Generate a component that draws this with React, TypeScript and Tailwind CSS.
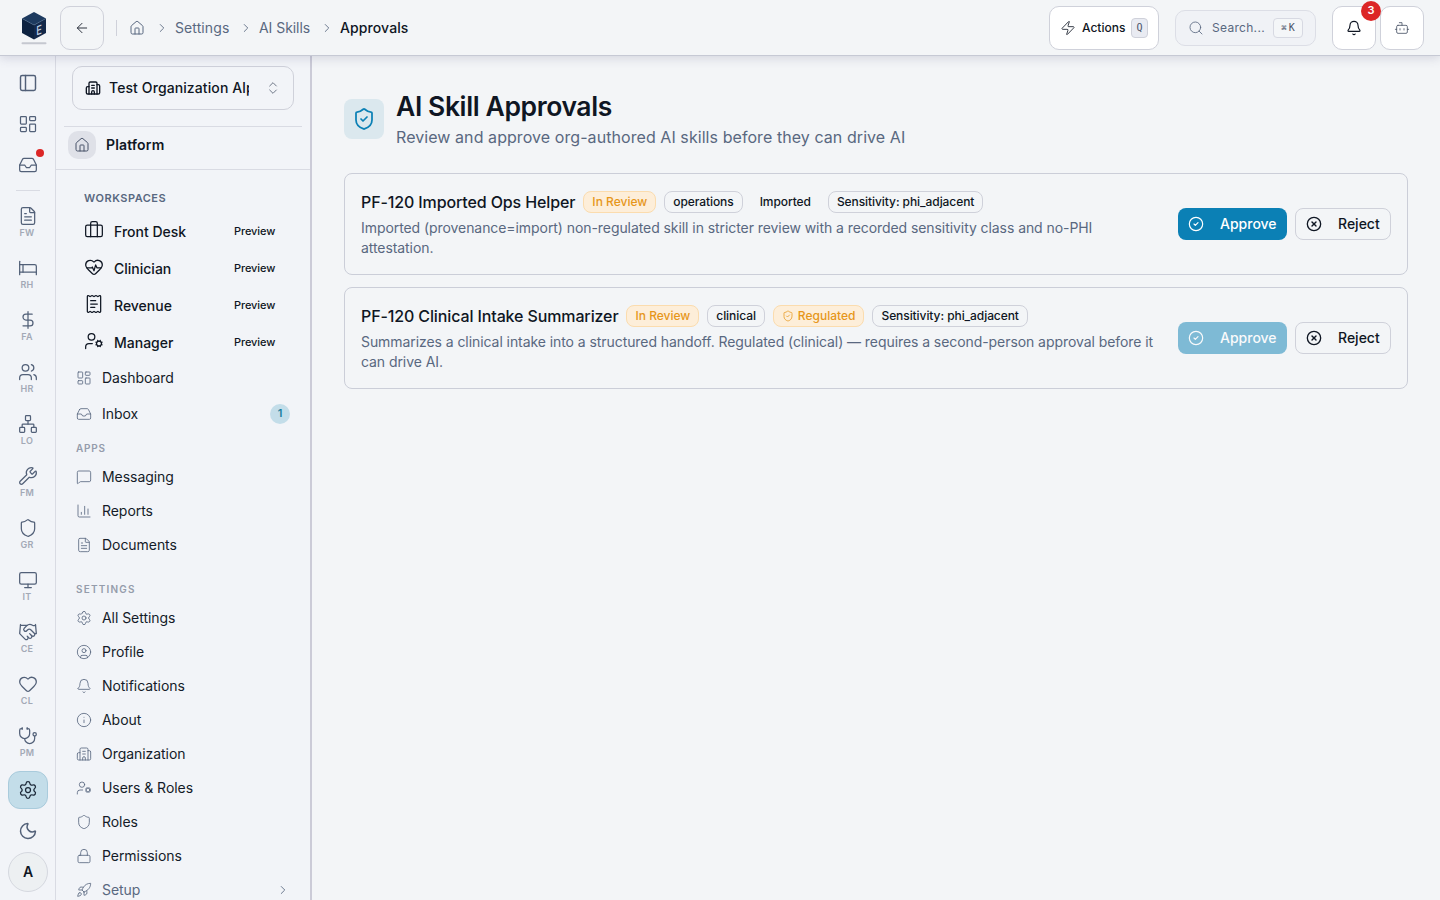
import type { ReactNode } from "react";
import {
  ArrowLeft,
  Bed,
  Bell,
  Bot,
  Briefcase,
  Building2,
  ChartColumn,
  ChevronRight,
  ChevronsUpDown,
  CircleCheck,
  CircleUser,
  CircleX,
  DollarSign,
  FileText,
  Handshake,
  Heart,
  HeartPulse,
  House,
  Inbox,
  Info,
  LayoutDashboard,
  Lock,
  MessageSquare,
  Monitor,
  Moon,
  Network,
  PanelLeft,
  ReceiptText,
  Rocket,
  Search,
  Settings,
  Shield,
  ShieldCheck,
  Stethoscope,
  UserCog,
  Users,
  Wrench,
  Zap,
  type LucideIcon,
} from "lucide-react";

type Item = { icon: LucideIcon; label: string };

const modules: Item[] = [
  { icon: FileText, label: "FW" },
  { icon: Bed, label: "RH" },
  { icon: DollarSign, label: "FA" },
  { icon: Users, label: "HR" },
  { icon: Network, label: "LO" },
  { icon: Wrench, label: "FM" },
  { icon: Shield, label: "GR" },
  { icon: Monitor, label: "IT" },
  { icon: Handshake, label: "CE" },
  { icon: Heart, label: "CL" },
  { icon: Stethoscope, label: "PM" },
];

const workspaces: Item[] = [
  { icon: Briefcase, label: "Front Desk" },
  { icon: HeartPulse, label: "Clinician" },
  { icon: ReceiptText, label: "Revenue" },
  { icon: UserCog, label: "Manager" },
];

const apps: Item[] = [
  { icon: MessageSquare, label: "Messaging" },
  { icon: ChartColumn, label: "Reports" },
  { icon: FileText, label: "Documents" },
];

const settings: Item[] = [
  { icon: Settings, label: "All Settings" },
  { icon: CircleUser, label: "Profile" },
  { icon: Bell, label: "Notifications" },
  { icon: Info, label: "About" },
  { icon: Building2, label: "Organization" },
  { icon: UserCog, label: "Users & Roles" },
  { icon: Shield, label: "Roles" },
  { icon: Lock, label: "Permissions" },
];

function Logo() {
  return (
    <svg width="28" height="36" viewBox="0 0 28 36">
      <path d="M14 2 26 8.5 14 15 2 8.5Z" fill="#1d3a5f" />
      <path d="M2 8.5 14 15V29.5L2 23Z" fill="#0d2240" />
      <path d="M14 15 26 8.5V23L14 29.5Z" fill="#14294a" />
      <path d="M2 8.5 14 15 26 8.5" fill="none" stroke="#4c6c90" strokeWidth="0.5" />
      <text
        fontSize="12.5"
        fontWeight="500"
        fill="#c3d3e6"
        fontFamily="Inter"
        transform="translate(16.3 25.6) skewY(-20) scale(0.75 1)"
      >
        E
      </text>
      <rect x="1.5" y="32.3" width="25" height="2" rx="1" fill="#c5c8d0" />
    </svg>
  );
}

function Header() {
  return (
    <header className="relative z-10 flex h-14 shrink-0 items-center border-b border-[#c6c9d4] bg-[#f3f5f7] pl-5 pr-4 shadow-[0_2px_10px_rgba(60,60,110,0.18)]">
      <Logo />
      <button className="ml-3 flex h-11 w-11 items-center justify-center rounded-[10px] border border-[#cfd1da]">
        <ArrowLeft size={16} strokeWidth={1.5} className="text-[#2e3440]" />
      </button>
      <div className="ml-3 h-4 w-px bg-[#cfd1da]" />
      <nav className="ml-3 flex items-center text-sm text-[#596880]">
        <House size={16} strokeWidth={1.5} />
        <ChevronRight size={14} strokeWidth={1.5} className="ml-2.5 mr-1.5" />
        <span className="w-[54px] tracking-[0.1px]">Settings</span>
        <ChevronRight size={14} strokeWidth={1.5} className="ml-2.5 mr-1.5" />
        <span className="w-[51px] whitespace-nowrap tracking-[-0.05px]">AI Skills</span>
        <ChevronRight size={14} strokeWidth={1.5} className="ml-2.5 mr-1.5" />
        <span className="font-medium tracking-[0.1px] text-[#0f1623]">Approvals</span>
      </nav>
      <div className="ml-auto flex items-center">
        <button className="flex h-11 w-[110px] items-center rounded-[10px] border border-[#cfd1da] bg-white pl-2.5 text-xs font-medium text-[#0f1623]">
          <Zap size={16} strokeWidth={1.25} />
          <span className="ml-1.5 w-[43px] text-left">Actions</span>
          <kbd className="ml-1.5 flex h-5 w-[17px] items-center justify-center rounded-[4px] border border-[#cfd1da] bg-[#e9ebf2] font-['DejaVu_Sans_Mono',monospace] text-[10px] text-[#4a5468]">
            Q
          </kbd>
        </button>
        <button className="ml-4 flex h-9 w-[141px] items-center rounded-[10px] border border-[#dcdee6] bg-[#f0f2f6] pl-3 text-xs text-[#596880]">
          <Search size={16} strokeWidth={1.25} />
          <span className="ml-2 w-[53px] text-left tracking-[0.3px]">Search...</span>
          <kbd className="ml-2 flex h-5 w-[30px] items-center justify-center rounded-[4px] border border-[#d7d9e2] bg-[#f4f6f8] font-['DejaVu_Sans_Mono',monospace] text-[10px] text-[#4a5468]">
            <span className="mr-0.5 text-[9px]">⌘</span>K
          </kbd>
        </button>
        <button className="relative ml-4 flex h-11 w-11 items-center justify-center rounded-[10px] border border-[#cfd1da] bg-white">
          <Bell size={16} strokeWidth={1.75} className="text-[#0f1623]" />
          <span className="absolute -right-1.5 -top-1.5 flex h-5 w-5 items-center justify-center rounded-full bg-[#dc2626] text-[11px] font-semibold text-white">
            3
          </span>
        </button>
        <button className="ml-1 flex h-11 w-11 items-center justify-center rounded-[10px] border border-[#cfd1da] bg-white">
          <Bot size={16} strokeWidth={1.25} className="text-[#4a5468]" />
        </button>
      </div>
    </header>
  );
}

function Rail() {
  return (
    <aside className="flex w-14 shrink-0 flex-col items-center border-r border-[#d9dbe3] bg-[#f2f4f8] text-[#526078]">
      <div className="mt-[7px] flex h-10 items-center">
        <PanelLeft size={20} strokeWidth={1.75} />
      </div>
      <div className="mt-px flex h-10 items-center">
        <LayoutDashboard size={20} strokeWidth={1.5} />
      </div>
      <div className="relative mt-px flex h-10 items-center">
        <Inbox size={20} strokeWidth={1.5} />
        <span className="absolute -right-1.5 top-1 h-2 w-2 rounded-full bg-[#dc2626]" />
      </div>
      <div className="mt-[5px] h-px w-6 shrink-0 bg-[#d9dbe3]" />
      <div className="mt-[15px] flex flex-col">
        {modules.map(({ icon: Icon, label }) => (
          <div key={label} className="flex h-[52px] w-10 flex-col items-center">
            <Icon size={20} strokeWidth={1.5} className="shrink-0" />
            <span className="mt-px -ml-px text-[9px] font-semibold leading-3 tracking-[0.3px] text-[#a3a9b6]">{label}</span>
          </div>
        ))}
      </div>
      <div className="-mt-[7px] flex h-[38px] w-10 shrink-0 items-center justify-center rounded-xl border border-[#a9cbdc] bg-[#c3dde9] text-[#1b2838]">
        <Settings size={20} strokeWidth={1.5} />
      </div>
      <Moon size={20} strokeWidth={1.75} className="mt-3 shrink-0" />
      <div className="mt-[11px] flex h-10 w-10 shrink-0 items-center justify-center rounded-full border border-[#d5d8df] bg-[#edf0f2] pl-px text-sm font-semibold text-[#0f1623]">
        A
      </div>
    </aside>
  );
}

function NavRow({ icon: Icon, label, tall, muted, children }: Item & { tall?: boolean; muted?: boolean; children?: ReactNode }) {
  return (
    <div className={`flex shrink-0 items-center pl-5 pr-5 text-sm tracking-[-0.05px] ${tall ? "h-9" : "h-[34px]"} ${muted ? "text-[#596880]" : "text-[#141b28]"}`}>
      <Icon size={16} strokeWidth={1.25} className="mr-2.5 text-[#596880]" />
      {label}
      {children}
    </div>
  );
}

function Sidebar() {
  return (
    <aside className="flex w-64 shrink-0 flex-col overflow-hidden border-r-2 border-[#cbcbd7] bg-[#f2f4f8]">
      <button className="mx-4 mt-2.5 flex h-11 shrink-0 items-center rounded-[10px] border border-[#cfd1da] pl-3 pr-3 text-sm font-medium text-[#0f1623]">
        <Building2 size={16} strokeWidth={2} className="shrink-0" />
        <span className="ml-2 w-[140px] overflow-hidden whitespace-nowrap text-left tracking-[0.1px]">Test Organization Alpha</span>
        <ChevronsUpDown size={16} strokeWidth={1.5} className="ml-auto text-[#6f7888]" />
      </button>
      <div className="mx-2 mt-4 h-px shrink-0 bg-[#d9dbe3]" />
      <div className="flex h-[43px] shrink-0 border-b border-[#d9dbe3] pl-3 pt-1">
        <div className="flex h-7 w-7 items-center justify-center rounded-[10px] bg-[#dfe1e8] text-[#465167]">
          <House size={16} strokeWidth={1.5} />
        </div>
        <span className="ml-2.5 text-sm font-semibold leading-7 tracking-[0.15px] text-[#0f1623]">Platform</span>
      </div>

      <div className="mt-5 shrink-0 pl-7 text-[11px] font-semibold leading-4 tracking-[0.5px] text-[#596880]">WORKSPACES</div>
      <div className="mt-[7px] shrink-0">
        {workspaces.map(({ icon: Icon, label }) => (
          <div key={label} className="flex h-[37px] items-center pl-7 text-sm font-medium text-[#0f1623]">
            <Icon size={20} strokeWidth={1.5} className="-mt-1" />
            <span className="ml-2.5 w-[120px]">{label}</span>
            <span className="-mt-0.5 text-[11px] leading-4 tracking-[-0.1px]">Preview</span>
          </div>
        ))}
      </div>
      <div className="-mt-px shrink-0">
        <NavRow icon={LayoutDashboard} label="Dashboard" tall />
        <NavRow icon={Inbox} label="Inbox" tall>
          <span className="ml-auto flex h-5 w-5 items-center justify-center rounded-full bg-[#c3dde9] text-[11px] font-semibold text-[#1a7d9e]">1</span>
        </NavRow>
      </div>

      <div className="mt-2 shrink-0 pl-5 text-[10px] font-semibold leading-[17px] tracking-[0.8px] text-[#959cab]">APPS</div>
      <div className="mt-[3px] shrink-0">
        {apps.map((item) => (
          <NavRow key={item.label} {...item} />
        ))}
      </div>

      <div className="mt-[19px] shrink-0 pl-5 text-[10px] font-semibold leading-[17px] tracking-[1.2px] text-[#959cab]">SETTINGS</div>
      <div className="mt-[3px] shrink-0">
        {settings.map((item) => (
          <NavRow key={item.label} {...item} />
        ))}
        <NavRow icon={Rocket} label="Setup" muted>
          <ChevronRight size={14} strokeWidth={1.5} className="ml-auto" />
        </NavRow>
      </div>
    </aside>
  );
}

function Badge({ tone, children }: { tone?: "warn" | "plain"; children: ReactNode }) {
  const tones = {
    warn: "border-[#fbdcae] bg-[#fdeed9] text-[#e6961a]",
    plain: "border-transparent tracking-[-0.08px] text-[#0f1623]",
    outline: "border-[#cfd1da] tracking-[-0.07px] text-[#0f1623]",
  };
  return (
    <span className={`flex h-[22px] items-center gap-1 rounded-lg border px-2 text-xs font-medium ${tones[tone ?? "outline"]}`}>
      {children}
    </span>
  );
}

function SkillCard({ title, badges, text, disabled }: { title: string; badges: ReactNode; text: string; disabled?: boolean }) {
  return (
    <article className="flex items-center gap-4 rounded-lg border border-[#cbced8] p-4">
      <div className="flex-1">
        <div className="flex h-6 items-center gap-2">
          <h2 className="text-base font-medium tracking-[-0.12px] text-[#0f1623]">{title}</h2>
          {badges}
        </div>
        <p className="mt-1 text-sm leading-5 tracking-[-0.07px] text-[#596880]">{text}</p>
      </div>
      <div className="flex gap-2 text-sm font-medium">
        <button
          disabled={disabled}
          className={`flex h-8 w-[109px] items-center gap-4 rounded-lg bg-[#0b80b5] px-2.5 text-white ${disabled ? "opacity-50" : ""}`}
        >
          <CircleCheck size={16} strokeWidth={1.75} className="shrink-0" />
          Approve
        </button>
        <button className="flex h-8 w-24 items-center gap-4 rounded-lg border border-[#cfd1da] px-2.5 text-[#0f1623]">
          <CircleX size={16} strokeWidth={2} className="shrink-0" />
          Reject
        </button>
      </div>
    </article>
  );
}

export default function App() {
  return (
    <div className="flex h-screen flex-col overflow-hidden bg-[#f3f5f7] font-['Inter',sans-serif]">
      <Header />
      <div className="flex min-h-0 flex-1">
        <Rail />
        <Sidebar />
        <main className="flex-1 px-8 pt-8">
          <div className="flex h-[61px] items-center gap-3">
            <div className="flex h-10 w-10 items-center justify-center rounded-lg bg-[#dbe8ee] text-[#0b80b5]">
              <ShieldCheck size={24} strokeWidth={1.75} />
            </div>
            <div>
              <h1 className="text-[26.5px] font-semibold leading-[37px] tracking-[-0.4px] text-[#0f1623]">AI Skill Approvals</h1>
              <p className="text-base leading-6 tracking-[0.07px] text-[#596880]">
                Review and approve org-authored AI skills before they can drive AI
              </p>
            </div>
          </div>

          <div className="mt-6 flex flex-col gap-3">
            <SkillCard
              title="PF-120 Imported Ops Helper"
              text="Imported (provenance=import) non-regulated skill in stricter review with a recorded sensitivity class and no-PHI attestation."
              badges={
                <>
                  <Badge tone="warn">In Review</Badge>
                  <Badge>operations</Badge>
                  <Badge tone="plain">Imported</Badge>
                  <Badge>Sensitivity: phi_adjacent</Badge>
                </>
              }
            />
            <SkillCard
              disabled
              title="PF-120 Clinical Intake Summarizer"
              text="Summarizes a clinical intake into a structured handoff. Regulated (clinical) — requires a second-person approval before it can drive AI."
              badges={
                <>
                  <Badge tone="warn">In Review</Badge>
                  <Badge>clinical</Badge>
                  <Badge tone="warn">
                    <ShieldCheck size={12} strokeWidth={1.5} />
                    Regulated
                  </Badge>
                  <Badge>Sensitivity: phi_adjacent</Badge>
                </>
              }
            />
          </div>
        </main>
      </div>
    </div>
  );
}
